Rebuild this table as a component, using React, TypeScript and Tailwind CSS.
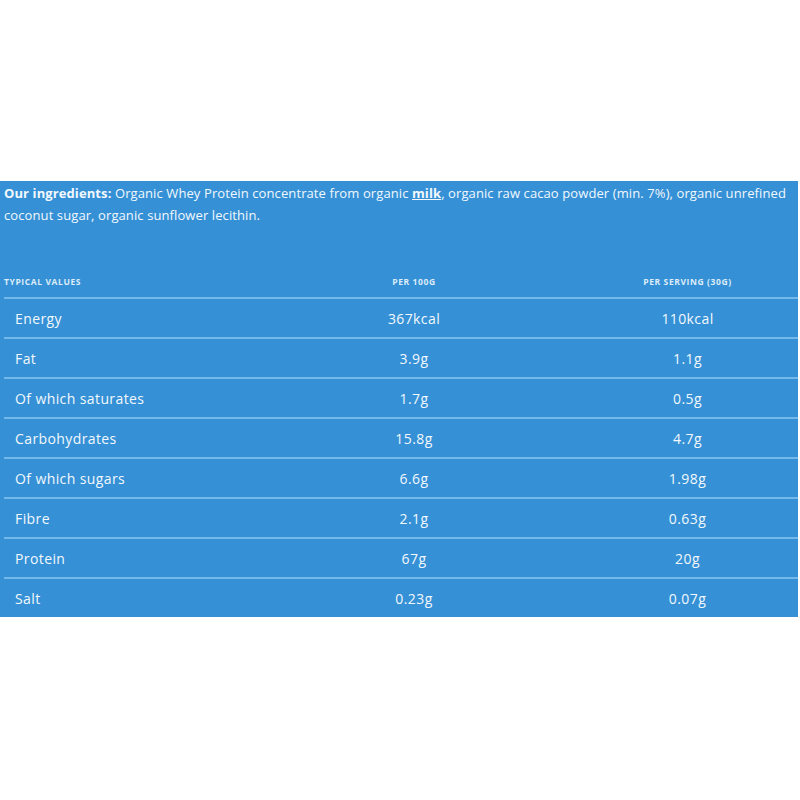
import React from 'react';

const rows = [
  ['Energy', '367kcal', '110kcal'],
  ['Fat', '3.9g', '1.1g'],
  ['Of which saturates', '1.7g', '0.5g'],
  ['Carbohydrates', '15.8g', '4.7g'],
  ['Of which sugars', '6.6g', '1.98g'],
  ['Fibre', '2.1g', '0.63g'],
  ['Protein', '67g', '20g'],
  ['Salt', '0.23g', '0.07g'],
];

export default function App() {
  return (
    <div className="w-[800px] h-[800px] bg-white pt-[181px]" style={{ fontFamily: '"Open Sans", "Liberation Sans", sans-serif' }}>
      <div className="w-[798px] bg-[#3590d5] text-[#f2f8fd] pl-[4px]">
        <p className="text-[13px] leading-[22px] pt-[1px] tracking-[0.1px]">
          <span className="font-bold">Our ingredients:</span> Organic Whey Protein concentrate from organic{' '}
          <span className="font-bold underline">milk</span>, organic raw cacao powder (min. 7%), organic unrefined coconut
          sugar, organic sunflower lecithin.
        </p>

        <div className="mt-[42px]">
          <div className="grid grid-cols-[247px_326px_1fr] h-[29px] items-center text-[8.5px] font-bold uppercase text-[#dcecf9] tracking-[0.6px]">
            <div>Typical values</div>
            <div className="text-center">Per 100g</div>
            <div className="text-center">Per serving (30g)</div>
          </div>
          {rows.map(([name, a, b]) => (
            <div
              key={name}
              className="grid grid-cols-[247px_326px_1fr] h-[40px] items-center border-t-2 border-[#74b8ea] text-[14px] tracking-[0.4px]"
            >
              <div className="pl-[11px]">{name}</div>
              <div className="text-center">{a}</div>
              <div className="text-center">{b}</div>
            </div>
          ))}
        </div>
      </div>
    </div>
  );
}
